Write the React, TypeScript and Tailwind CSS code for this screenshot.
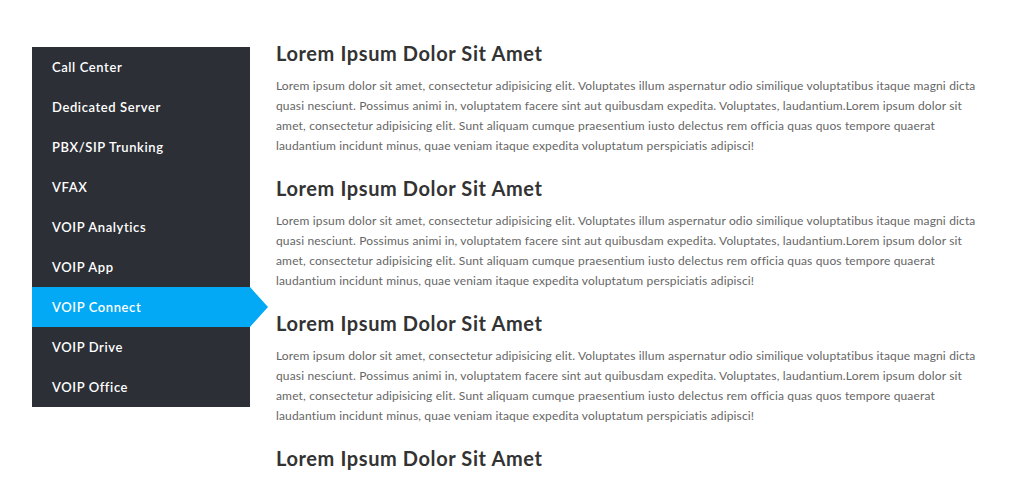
const menu = [
  "Call Center",
  "Dedicated Server",
  "PBX/SIP Trunking",
  "VFAX",
  "VOIP Analytics",
  "VOIP App",
  "VOIP Connect",
  "VOIP Drive",
  "VOIP Office",
]

const text =
  "Lorem ipsum dolor sit amet, consectetur adipisicing elit. Voluptates illum aspernatur odio similique voluptatibus itaque magni dicta quasi nesciunt. Possimus animi in, voluptatem facere sint aut quibusdam expedita. Voluptates, laudantium.Lorem ipsum dolor sit amet, consectetur adipisicing elit. Sunt aliquam cumque praesentium iusto delectus rem officia quas quos tempore quaerat laudantium incidunt minus, quae veniam itaque expedita voluptatum perspiciatis adipisci!"

const App = () => {
  const active = "VOIP Connect"

  return (
    <main className="h-[485px] overflow-hidden bg-white font-['Lato',sans-serif]">
      <div className="flex pl-[32px] pt-[38px]">
        <ul className="mt-[9px] w-[218px] shrink-0 self-start bg-[#2d2f36]">
          {menu.map(item => (
            <li key={item} className="relative">
              <a
                className={
                  item === active
                    ? "block h-[40px] bg-[#03a9f4] pl-[20px] text-[13px] font-semibold leading-[40px] tracking-[0.6px] text-white"
                    : "block h-[40px] pl-[20px] text-[13px] font-semibold leading-[40px] tracking-[0.6px] text-white"
                }
              >
                {item}
              </a>
              {item === active ? (
                <span className="absolute left-full top-0 h-0 w-0 border-y-[20px] border-l-[18px] border-y-transparent border-l-[#03a9f4]" />
              ) : null}
            </li>
          ))}
        </ul>

        <div className="ml-[26px] w-[705px]">
          {[1, 2, 3, 4].map(n => (
            <section key={n} className="mb-[17px]">
              <h2 className="mb-2 text-[20px] font-bold leading-[30px] tracking-[0.6px] text-[#333]">
                Lorem Ipsum Dolor Sit Amet
              </h2>
              <p className="text-[12px] leading-[20px] tracking-[0.15px] text-[#666]">{text}</p>
            </section>
          ))}
        </div>
      </div>
    </main>
  )
}

export default App
